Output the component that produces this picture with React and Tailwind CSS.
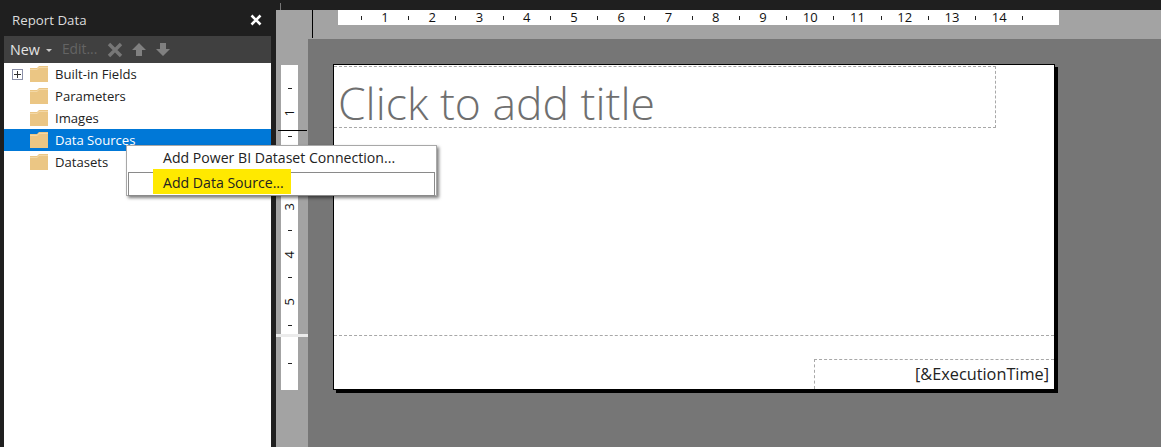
import React from 'react'

const items = ['Built-in Fields', 'Parameters', 'Images', 'Data Sources', 'Datasets']
const hNums = Array.from({ length: 14 }, (_, i) => i + 1)

const Folder = () => (
  <svg width="20" height="18" viewBox="0 0 20 18" className="shrink-0">
    <path d="M1 3h7l2-2h9v16H1z" fill="#ebc684" />
    <path d="M1 4h7l2-2h9v1h-9l-2 2H1z" fill="#f3d8a6" />
  </svg>
)

const Tick = () => <div className="w-px h-[4px] bg-[#222]" />

const VTick = () => <div className="w-[4px] h-px bg-[#222]" />

function ReportData() {
  return (
    <aside className="w-[271px] shrink-0 flex flex-col pl-[4px]">
      {/* Header */}
      <div className="h-[36px] flex items-center justify-between pl-[8px] pr-[9px] pt-[4px] text-[13.3px] text-[#dcdcdc]">
        <span className="pt-[2px]">Report Data</span>
        <svg width="12" height="12" viewBox="0 0 12 12">
          <path d="M1.5 1.5l9 9M10.5 1.5l-9 9" stroke="#fff" strokeWidth="2.6" />
        </svg>
      </div>

      {/* Toolbar */}
      <div className="h-[27px] bg-[#404040] flex items-center pl-[6px]">
        <span className="text-[14.3px] text-[#e4e4e4]">New</span>
        <svg width="6" height="3" viewBox="0 0 6 3" className="ml-[6px] mt-[2px]">
          <path d="M0 0h6L3 3z" fill="#c8c8c8" />
        </svg>
        <span className="ml-[10px] text-[13.8px] text-[#646464]">Edit...</span>
        <svg width="16" height="16" viewBox="0 0 16 16" className="ml-[10px]">
          <path d="M2 2l12 12M14 2L2 14" stroke="#777" strokeWidth="3.4" />
        </svg>
        <svg width="14" height="13" viewBox="0 0 14 13" className="ml-[9px]">
          <path d="M7 0l7 7H10v6H4V7H0z" fill="#808080" />
        </svg>
        <svg width="14" height="13" viewBox="0 0 14 13" className="ml-[10px]">
          <path d="M7 13L0 6h4V0h6v6h4z" fill="#808080" />
        </svg>
      </div>

      {/* Tree */}
      <div className="flex-1 bg-white">
        {items.map((name, i) => (
          <div
            key={name}
            className={
              'h-[22px] flex items-center pl-[25px] relative text-[13.1px] ' +
              (name === 'Data Sources' ? 'bg-[#0078d7] text-white' : 'text-[#222]')
            }
          >
            {i === 0 && (
              <div className="absolute left-[8px] top-[6px] w-[11px] h-[11px] border border-[#8a8fa8] flex items-center justify-center">
                <svg width="7" height="7" viewBox="0 0 7 7">
                  <path d="M3.5 0v7M0 3.5h7" stroke="#333" strokeWidth="1" />
                </svg>
              </div>
            )}
            <Folder />
            <span className="ml-[6px] pt-[2px]">{name}</span>
          </div>
        ))}
      </div>
    </aside>
  )
}

function VerticalRuler() {
  // the 2 sits under the context menu in this view
  const cells = ['t', '1', 't', '', 't', '3', 't', '4', 't', '5', 't']
  return (
    <div className="w-[32px] shrink-0 bg-[#a3a3a3] flex flex-col relative">
      <div className="h-[26px]" />
      <div className="h-[269px] w-[17px] ml-[5px] bg-white pt-[12px]">
        {cells.map((c, i) => (
          <div key={i} className="h-[23.65px] flex items-center justify-center text-[13px] text-[#111]">
            {c === 't' ? <VTick /> : <span className="-rotate-90">{c}</span>}
          </div>
        ))}
      </div>
      <div className="h-[3px] bg-[#ebebeb]" />
      <div className="h-[53px] w-[17px] ml-[5px] bg-white flex items-center justify-center">
        <VTick />
      </div>
      {/* position marker */}
      <div className="absolute left-[2px] right-[1px] top-[91px] h-px bg-black" />
    </div>
  )
}

function ReportPage() {
  return (
    <div className="w-[722px] h-[326px] bg-white border border-black shadow-[3px_3px_0_#000] flex flex-col">
      <div className="w-[662px] h-[62px] mt-px border border-dashed border-[#a8a8a8] border-l-0 flex items-center pl-[4px] pt-[12px] shrink-0">
        <span className="text-[44.5px] font-light text-[#6f6f6f] leading-none">Click to add title</span>
      </div>
      <div className="flex-1" />
      <div className="h-[54px] border-t border-dashed border-[#a8a8a8] flex flex-col justify-end items-end shrink-0">
        <div className="w-[240px] h-[30px] border-t border-l border-dashed border-[#a8a8a8] flex items-center justify-end pr-[5px] text-[16.3px] text-[#222]">
          [&amp;ExecutionTime]
        </div>
      </div>
    </div>
  )
}

export default function App() {
  return (
    <div className="w-full h-screen overflow-hidden bg-[#1f1f1f] flex font-['Open_Sans',sans-serif] relative">
      <ReportData />

      <div className="flex-1 flex flex-col pl-[5px] relative">
        <div className="h-[10px] shrink-0 relative">
          <div className="absolute left-[4px] top-[3px] bottom-0 w-px bg-[#777]" />
        </div>

        {/* Top ruler band */}
        <div className="h-[29px] shrink-0 bg-[#a3a3a3] pl-[62px] relative">
          <div className="absolute left-[36px] top-0 bottom-[1px] w-px bg-black" />
          <div className="w-[721px] h-[15px] bg-white flex pl-[11.5px]">
            {hNums.map((n) => (
              <React.Fragment key={n}>
                <div className="w-[23.63px] flex items-center justify-center"><Tick /></div>
                <div className="w-[23.63px] flex items-center justify-center text-[13px] text-[#111]">{n}</div>
              </React.Fragment>
            ))}
            <div className="w-[23.63px] flex items-center justify-center"><Tick /></div>
          </div>
        </div>

        <div className="flex-1 flex min-h-0">
          <VerticalRuler />
          <div className="flex-1 bg-[#767676] pl-[25px] pt-[25px]">
            <ReportPage />
          </div>
        </div>
      </div>

      {/* Context menu */}
      <div className="absolute left-[126px] top-[145px] w-[311px] h-[51px] bg-white border border-[#a8a8a8] shadow-[2px_2px_3px_rgba(0,0,0,0.5)] text-[14.1px] text-[#222] p-px">
        <div className="h-[25px] flex items-center pl-[35px] pb-[3px]">Add Power BI Dataset Connection...</div>
        <div className="h-[24px] border border-[#8a8a8a] relative flex items-center pl-[34px] pb-[2px]">
          <div className="absolute left-[24px] top-[-4px] w-[138px] h-[25px] bg-[#ffe900]" />
          <span className="relative">Add Data Source...</span>
        </div>
      </div>
    </div>
  )
}
